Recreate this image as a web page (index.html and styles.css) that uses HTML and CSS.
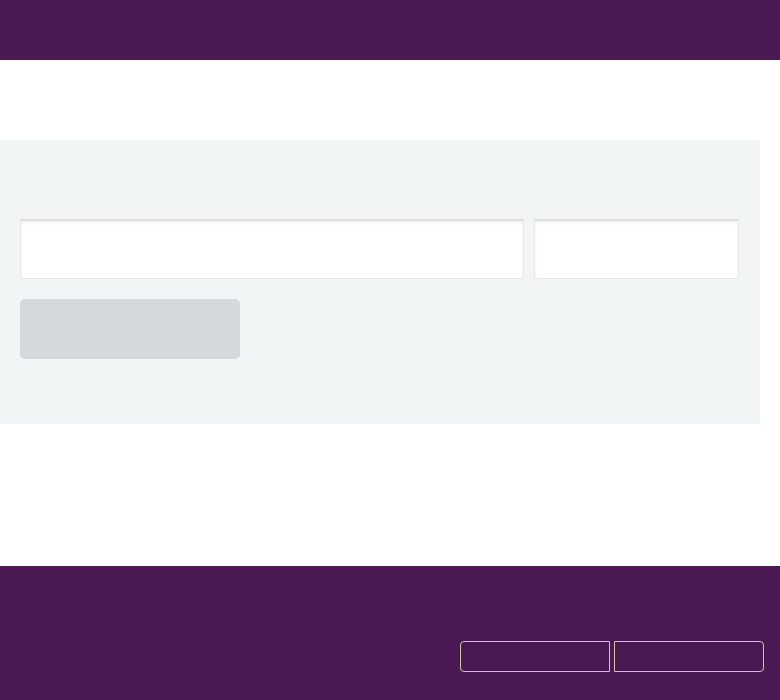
FILE: index.html
```html
<!DOCTYPE html>
<html lang="en">
<head>
  <meta charset="UTF-8">
  <title>Search</title>
  <link rel="stylesheet" href="styles.css">
</head>
<body>

<header class="topbar"></header>

<main class="page">
  <section class="panel">
    <div class="fields">
      <input type="text" class="field field-main">
      <input type="text" class="field field-side">
    </div>
    <button class="submit" disabled></button>
  </section>
</main>

<footer class="footer">
  <div class="footer-actions">
    <button class="outline outline-left"></button>
    <button class="outline outline-right"></button>
  </div>
</footer>

</body>
</html>
```

FILE: styles.css
```css
body {
  margin: 0;
  font-family: "Liberation Sans", Arial, sans-serif;
  background-color: #ffffff;
}
.topbar {
  height: 60px;
  background-color: #4a1853;
}
.page {
  width: 760px;
  padding: 80px 0 142px;
}
.panel {
  height: 284px;
  box-sizing: border-box;
  padding: 79px 20px 0;
  background-color: #f2f5f6;
}
.fields {
  display: flex;
  gap: 10px;
}
.field {
  height: 60px;
  box-sizing: border-box;
  border: 1px solid #e6e9ea;
  border-top: 2px solid #dadddf;
  background-color: #ffffff;
  box-shadow: inset 0 2px 3px rgba(0,0,0,0.06);
  padding: 6px;
}
.field-main {
  width: 504px;
}
.field-side {
  width: 205px;
}
.submit {
  display: block;
  margin-top: 20px;
  width: 220px;
  height: 60px;
  border: none;
  border-radius: 5px;
  background-color: #d5d9db;
}
.footer {
  height: 134px;
  box-sizing: border-box;
  padding-top: 75px;
  background-color: #4a1853;
}
.footer-actions {
  display: flex;
  justify-content: flex-end;
  gap: 4px;
  padding-right: 16px;
}
.outline {
  width: 150px;
  height: 31px;
  background: transparent;
  border: 1px solid #d7c2a2;
}
.outline-left {
  border-radius: 4px 0 0 4px;
}
.outline-right {
  border-radius: 0 4px 4px 0;
}
```
